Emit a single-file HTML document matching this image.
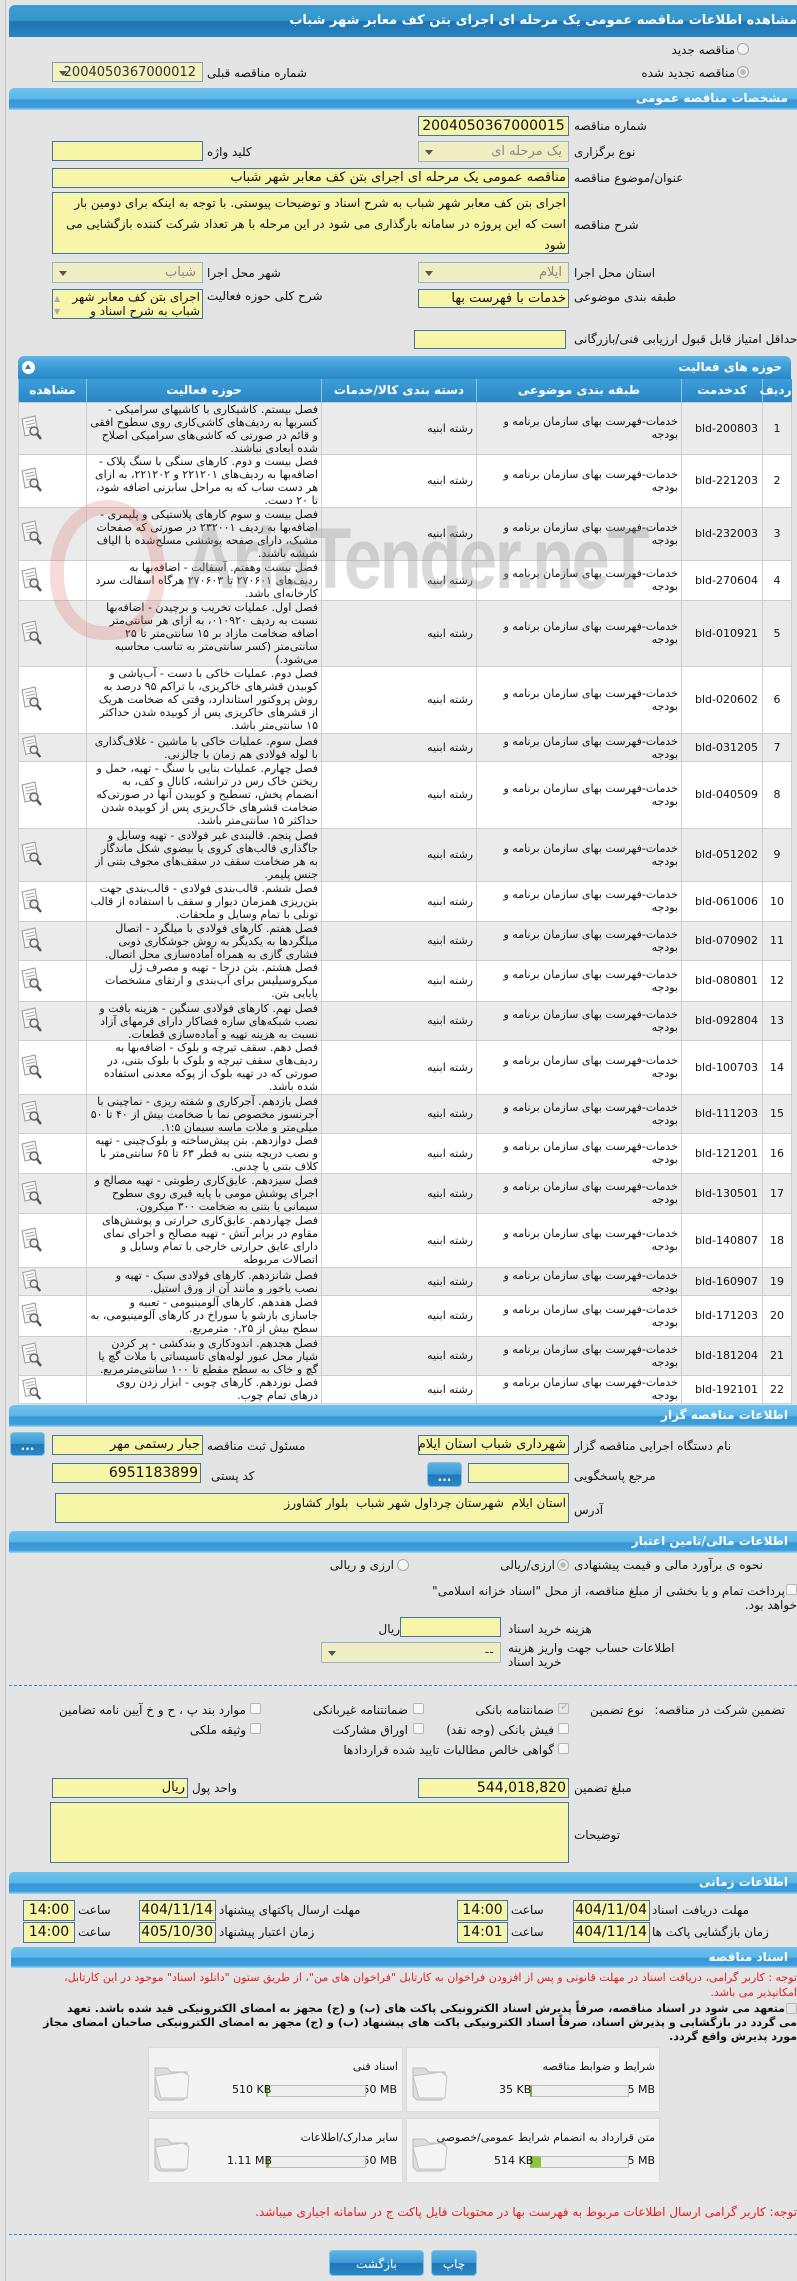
<!DOCTYPE html>
<html><head><meta charset="utf-8">
<style>
*{box-sizing:border-box;margin:0;padding:0}
body{width:797px;height:2281px;background:#e4e4e4;font-family:Tahoma,"DejaVu Sans",sans-serif;font-size:12px;color:#111;position:relative;overflow:hidden}
.a{position:absolute;white-space:nowrap;direction:rtl;line-height:16px}
.tbar{position:absolute;left:9px;right:0;top:5px;height:32px;background:linear-gradient(#3c9dd2 0%,#3596cd 48%,#1c74b2 52%,#2a86c2 100%);border-radius:6px 0 0 0;color:#fff;font-weight:bold;font-size:13px;direction:rtl;line-height:32px;white-space:nowrap;overflow:hidden}
.sbar{position:absolute;left:9px;right:0;height:22px;background:linear-gradient(#6fc3ec 0%,#5cb6e7 48%,#3597d7 55%,#3f9fdc 88%,#a8d9f2 100%);border-radius:5px 0 0 0;color:#fff;font-weight:bold;font-size:12px;direction:rtl;line-height:21px;padding-right:9px;white-space:nowrap}
.in{position:absolute;background:#f7f5a8;border:1px solid #3f74ad;direction:rtl;font-size:13px;line-height:18px;padding:0 2px;white-space:nowrap;overflow:hidden}
.sel{position:absolute;background:#efedc2;border:1px solid #9bb3c8;direction:rtl;font-size:13px;color:#888;line-height:19px;padding:0 6px;white-space:nowrap}
.sel:after{content:"";position:absolute;left:6px;top:8px;border-left:4px solid transparent;border-right:4px solid transparent;border-top:5px solid #555}
.rad{position:absolute;width:12px;height:12px;border:1px solid #aaa;border-radius:50%;background:#f4f4f4}
.chk{position:absolute;width:11px;height:11px;border:1px solid #b5b5b5;border-radius:2px;background:#f7f7f7}
.btn{position:absolute;background:linear-gradient(#5db4e2 0%,#3c9ad6 48%,#1f77b4 52%,#2d88c6 100%);border:1px solid #7ec3ea;border-radius:4px;color:#fff;text-align:center;font-weight:bold}
.dash{position:absolute;left:9px;right:0;border-top:1px dashed #3a8ac8}
table{position:absolute;left:18px;top:379px;width:773px;border-collapse:collapse;table-layout:fixed;direction:rtl;font-size:11px;line-height:13px}
th{background:linear-gradient(#3d9ed8,#2a86c4);color:#fff;font-weight:bold;font-size:12px;height:23px;border-left:1px solid #8cc6ea;text-align:center}
td{border:1px solid #cfcfcf;vertical-align:middle;padding:0 3px;overflow:hidden}
tr:nth-child(odd) td{background:#fff}
tr:nth-child(even) td{background:#ebebeb}
td.n{text-align:center}
td.c{text-align:right;direction:ltr;padding-right:4px}
td.v{text-align:left;padding-left:0}
td div{overflow:hidden}
.fb{position:absolute;background:#f3f3f3;box-shadow:0 0 2px #ccc}
.fb .t{position:absolute;right:4px;top:12px;direction:rtl;font-size:11px;white-space:nowrap}
.fb .bar{position:absolute;top:37px;height:12px;background:#eee;border:1px solid #bbb;border-left:2px solid #7ab030}
.fb .s{position:absolute;top:35px;font-size:11px;white-space:nowrap}
.fb svg{position:absolute;left:2px;top:12px}
.red{color:#e02020}
.sm{font-size:11px}
</style></head><body>
<div style="position:absolute;left:5px;top:0;width:1px;height:2281px;background:#c6c6c6"></div>

<div class="tbar">مشاهده اطلاعات مناقصه عمومی یک مرحله ای اجرای بتن کف معابر شهر شباب</div>

<div class="rad" style="left:737px;top:43px"></div>
<div class="a" style="right:62px;top:42px">مناقصه جدید</div>
<div class="rad" style="left:737px;top:66px;background:radial-gradient(#bbb 35%,#eee 45%)"></div>
<div class="a" style="right:62px;top:65px">مناقصه تجدید شده</div>
<div class="sel" style="left:52px;top:62px;width:151px;height:20px;color:#333;background:#f3f1c0;border-color:#7f9fc0">2004050367000012</div>
<div class="a" style="left:207px;top:65px">شماره مناقصه قبلی</div>

<div class="sbar" style="top:88px">مشخصات مناقصه عمومی</div>

<div class="in" style="left:418px;top:116px;width:151px;height:20px;text-align:center;font-size:14px">2004050367000015</div>
<div class="a" style="left:574px;top:118px">شماره مناقصه</div>
<div class="sel" style="left:418px;top:141px;width:151px;height:21px">یک مرحله ای</div>
<div class="a" style="left:574px;top:144px">نوع برگزاری</div>
<div class="in" style="left:52px;top:141px;width:151px;height:20px"></div>
<div class="a" style="left:207px;top:144px">کلید واژه</div>
<div class="in" style="left:52px;top:168px;width:517px;height:20px;font-size:13px">مناقصه عمومی یک مرحله ای اجرای بتن کف معابر شهر شباب</div>
<div class="a" style="left:574px;top:170px">عنوان/موضوع مناقصه</div>
<div class="in" style="left:52px;top:192px;width:517px;height:62px;white-space:normal;font-size:12px;line-height:21px">اجرای بتن کف معابر شهر شباب به شرح اسناد و توضیحات پیوستی. با توجه به اینکه برای دومین بار است که این پروژه در سامانه بارگذاری می شود در این مرحله با هر تعداد شرکت کننده بازگشایی می شود</div>
<div class="a" style="left:574px;top:217px">شرح مناقصه</div>
<div class="sel" style="left:418px;top:262px;width:151px;height:21px">ایلام</div>
<div class="a" style="left:574px;top:265px">استان محل اجرا</div>
<div class="sel" style="left:52px;top:262px;width:151px;height:21px">شباب</div>
<div class="a" style="left:207px;top:265px">شهر محل اجرا</div>
<div class="in" style="left:418px;top:289px;width:151px;height:19px">خدمات با فهرست بها</div>
<div class="a" style="left:574px;top:289px">طبقه بندی موضوعی</div>
<div class="in" style="left:52px;top:289px;width:151px;height:30px;white-space:normal;font-size:12px;line-height:14px;padding-left:14px">اجرای بتن کف معابر شهر شباب به شرح اسناد و</div>
<div style="position:absolute;left:54px;top:292px;color:#aaa;font-size:8px;line-height:13px">▲<br>▼</div>
<div class="a" style="left:207px;top:288px">شرح کلی حوزه فعالیت</div>
<div class="in" style="left:414px;top:330px;width:152px;height:19px"></div>
<div class="a" style="left:574px;top:331px">حداقل امتیاز قابل قبول ارزیابی فنی/بازرگانی</div>

<div class="sbar" style="left:18px;right:6px;top:356px;height:23px;border-radius:6px 6px 0 0;background:linear-gradient(#5ab3e3 0%,#3c9cd8 50%,#2a88c6 100%);line-height:23px">حوزه های فعالیت</div>
<div style="position:absolute;left:22px;top:361px;width:13px;height:13px;border-radius:50%;background:#fff;"><div style="position:absolute;left:3px;top:3px;border-left:3.5px solid transparent;border-right:3.5px solid transparent;border-bottom:5px solid #2a80c0"></div></div>

<table>
<colgroup><col style="width:29px"><col style="width:81px"><col style="width:205px"><col style="width:155px"><col style="width:235px"><col style="width:68px"></colgroup>
<tr><th>ردیف</th><th>کدخدمت</th><th>طبقه بندی موضوعی</th><th>دسته بندی کالا/خدمات</th><th>حوزه فعالیت</th><th>مشاهده</th></tr>
<tr style="height:52px"><td class="n">1</td><td class="c">bld-200803</td><td>خدمات-فهرست بهای سازمان برنامه و<br>بودجه</td><td>رشته ابنیه</td><td><div style="max-height:51px">فصل بیستم. کاشیکاری با کاشیهای سرامیکی - کسربها به ردیف‌های کاشی‌کاری روی سطوح افقی و قائم در صورتی که کاشی‌های سرامیکی اصلاح شده ابعادی نباشند.</div></td><td class="v"><svg width="26" height="26" viewBox="0 0 26 26"><path d="M3 5L16 2L19 19L6 22Z" fill="#fafafa" stroke="#999"/><path d="M6 8l9-2M7 11l9-2M7 14l6-1" stroke="#aaa"/><circle cx="15" cy="17" r="4" fill="#e8eef4" stroke="#666" stroke-width="1.5"/><path d="M18 20l4 5" stroke="#555" stroke-width="2.5"/></svg></td></tr>
<tr style="height:53px"><td class="n">2</td><td class="c">bld-221203</td><td>خدمات-فهرست بهای سازمان برنامه و<br>بودجه</td><td>رشته ابنیه</td><td><div style="max-height:52px">فصل بیست و دوم. کارهای سنگی با سنگ پلاک - اضافه‌بها به ردیف‌های ۲۲۱۲۰۱ و ۲۲۱۲۰۲، به ازای هر دست ساب که به مراحل سابزنی اضافه شود، تا ۲۰ دست.</div></td><td class="v"><svg width="26" height="26" viewBox="0 0 26 26"><path d="M3 5L16 2L19 19L6 22Z" fill="#fafafa" stroke="#999"/><path d="M6 8l9-2M7 11l9-2M7 14l6-1" stroke="#aaa"/><circle cx="15" cy="17" r="4" fill="#e8eef4" stroke="#666" stroke-width="1.5"/><path d="M18 20l4 5" stroke="#555" stroke-width="2.5"/></svg></td></tr>
<tr style="height:53px"><td class="n">3</td><td class="c">bld-232003</td><td>خدمات-فهرست بهای سازمان برنامه و<br>بودجه</td><td>رشته ابنیه</td><td><div style="max-height:52px">فصل بیست و سوم کارهای پلاستیکی و پلیمری - اضافه‌بها به ردیف ۲۳۲۰۰۱ در صورتی که صفحات مشبک، دارای صفحه پوششی مسلح‌شده با الیاف شیشه باشند.</div></td><td class="v"><svg width="26" height="26" viewBox="0 0 26 26"><path d="M3 5L16 2L19 19L6 22Z" fill="#fafafa" stroke="#999"/><path d="M6 8l9-2M7 11l9-2M7 14l6-1" stroke="#aaa"/><circle cx="15" cy="17" r="4" fill="#e8eef4" stroke="#666" stroke-width="1.5"/><path d="M18 20l4 5" stroke="#555" stroke-width="2.5"/></svg></td></tr>
<tr style="height:40px"><td class="n">4</td><td class="c">bld-270604</td><td>خدمات-فهرست بهای سازمان برنامه و<br>بودجه</td><td>رشته ابنیه</td><td><div style="max-height:39px">فصل بیست وهفتم. آسفالت - اضافه‌بها به ردیف‌های ۲۷۰۶۰۱ تا ۲۷۰۶۰۳ هرگاه اسفالت سرد کارخانه‌ای باشد.</div></td><td class="v"><svg width="26" height="26" viewBox="0 0 26 26"><path d="M3 5L16 2L19 19L6 22Z" fill="#fafafa" stroke="#999"/><path d="M6 8l9-2M7 11l9-2M7 14l6-1" stroke="#aaa"/><circle cx="15" cy="17" r="4" fill="#e8eef4" stroke="#666" stroke-width="1.5"/><path d="M18 20l4 5" stroke="#555" stroke-width="2.5"/></svg></td></tr>
<tr style="height:66px"><td class="n">5</td><td class="c">bld-010921</td><td>خدمات-فهرست بهای سازمان برنامه و<br>بودجه</td><td>رشته ابنیه</td><td><div style="max-height:65px">فصل اول. عملیات تخریب و برچیدن - اضافه‌بها نسبت به ردیف ۰۱۰۹۲۰، به ازای هر سانتی‌متر اضافه ضخامت مازاد بر ۱۵ سانتی‌متر تا ۲۵ سانتی‌متر (کسر سانتی‌متر به تناسب محاسبه می‌شود.)</div></td><td class="v"><svg width="26" height="26" viewBox="0 0 26 26"><path d="M3 5L16 2L19 19L6 22Z" fill="#fafafa" stroke="#999"/><path d="M6 8l9-2M7 11l9-2M7 14l6-1" stroke="#aaa"/><circle cx="15" cy="17" r="4" fill="#e8eef4" stroke="#666" stroke-width="1.5"/><path d="M18 20l4 5" stroke="#555" stroke-width="2.5"/></svg></td></tr>
<tr style="height:67px"><td class="n">6</td><td class="c">bld-020602</td><td>خدمات-فهرست بهای سازمان برنامه و<br>بودجه</td><td>رشته ابنیه</td><td><div style="max-height:66px">فصل دوم. عملیات خاکی با دست - آب‌پاشی و کوبیدن قشرهای خاکریزی، با تراکم ۹۵ درصد به روش پروکتور استاندارد، وقتی که ضخامت هریک از قشرهای خاکریزی پس از کوبیده شدن حداکثر ۱۵ سانتی‌متر باشد.</div></td><td class="v"><svg width="26" height="26" viewBox="0 0 26 26"><path d="M3 5L16 2L19 19L6 22Z" fill="#fafafa" stroke="#999"/><path d="M6 8l9-2M7 11l9-2M7 14l6-1" stroke="#aaa"/><circle cx="15" cy="17" r="4" fill="#e8eef4" stroke="#666" stroke-width="1.5"/><path d="M18 20l4 5" stroke="#555" stroke-width="2.5"/></svg></td></tr>
<tr style="height:26px"><td class="n">7</td><td class="c">bld-031205</td><td><div style="max-height:25px">خدمات-فهرست بهای سازمان برنامه و<br>بودجه</div></td><td>رشته ابنیه</td><td><div style="max-height:25px">فصل سوم. عملیات خاکی با ماشین - غلاف‌گذاری با لوله فولادی هم زمان با چالزنی.</div></td><td class="v"><svg width="26" height="24" viewBox="0 0 26 26"><path d="M3 5L16 2L19 19L6 22Z" fill="#fafafa" stroke="#999"/><path d="M6 8l9-2M7 11l9-2M7 14l6-1" stroke="#aaa"/><circle cx="15" cy="17" r="4" fill="#e8eef4" stroke="#666" stroke-width="1.5"/><path d="M18 20l4 5" stroke="#555" stroke-width="2.5"/></svg></td></tr>
<tr style="height:67px"><td class="n">8</td><td class="c">bld-040509</td><td>خدمات-فهرست بهای سازمان برنامه و<br>بودجه</td><td>رشته ابنیه</td><td><div style="max-height:66px">فصل چهارم. عملیات بنایی با سنگ - تهیه، حمل و ریختن خاک رس در ترانشه، کانال و کف، به انضمام پخش، تسطیح و کوبیدن آنها در صورتی‌که ضخامت قشرهای خاک‌ریزی پس از کوبیده شدن حداکثر ۱۵ سانتی‌متر باشد.</div></td><td class="v"><svg width="26" height="26" viewBox="0 0 26 26"><path d="M3 5L16 2L19 19L6 22Z" fill="#fafafa" stroke="#999"/><path d="M6 8l9-2M7 11l9-2M7 14l6-1" stroke="#aaa"/><circle cx="15" cy="17" r="4" fill="#e8eef4" stroke="#666" stroke-width="1.5"/><path d="M18 20l4 5" stroke="#555" stroke-width="2.5"/></svg></td></tr>
<tr style="height:53px"><td class="n">9</td><td class="c">bld-051202</td><td>خدمات-فهرست بهای سازمان برنامه و<br>بودجه</td><td>رشته ابنیه</td><td><div style="max-height:52px">فصل پنجم. قالبندی غیر فولادی - تهیه وسایل و جاگذاری قالب‌های کروی یا بیضوی شکل ماندگار به هر ضخامت سقف در سقف‌های مجوف بتنی از جنس پلیمر.</div></td><td class="v"><svg width="26" height="26" viewBox="0 0 26 26"><path d="M3 5L16 2L19 19L6 22Z" fill="#fafafa" stroke="#999"/><path d="M6 8l9-2M7 11l9-2M7 14l6-1" stroke="#aaa"/><circle cx="15" cy="17" r="4" fill="#e8eef4" stroke="#666" stroke-width="1.5"/><path d="M18 20l4 5" stroke="#555" stroke-width="2.5"/></svg></td></tr>
<tr style="height:40px"><td class="n">10</td><td class="c">bld-061006</td><td>خدمات-فهرست بهای سازمان برنامه و<br>بودجه</td><td>رشته ابنیه</td><td><div style="max-height:39px">فصل ششم. قالب‌بندی فولادی - قالب‌بندی جهت بتن‌ریزی همزمان دیوار و سقف با استفاده از قالب تونلی با تمام وسایل و ملحقات.</div></td><td class="v"><svg width="26" height="26" viewBox="0 0 26 26"><path d="M3 5L16 2L19 19L6 22Z" fill="#fafafa" stroke="#999"/><path d="M6 8l9-2M7 11l9-2M7 14l6-1" stroke="#aaa"/><circle cx="15" cy="17" r="4" fill="#e8eef4" stroke="#666" stroke-width="1.5"/><path d="M18 20l4 5" stroke="#555" stroke-width="2.5"/></svg></td></tr>
<tr style="height:39px"><td class="n">11</td><td class="c">bld-070902</td><td>خدمات-فهرست بهای سازمان برنامه و<br>بودجه</td><td>رشته ابنیه</td><td><div style="max-height:38px">فصل هفتم. کارهای فولادی با میلگرد - اتصال میلگردها به یکدیگر به روش جوشکاری ذوبی فشاری گازی به همراه آماده‌سازی محل اتصال.</div></td><td class="v"><svg width="26" height="26" viewBox="0 0 26 26"><path d="M3 5L16 2L19 19L6 22Z" fill="#fafafa" stroke="#999"/><path d="M6 8l9-2M7 11l9-2M7 14l6-1" stroke="#aaa"/><circle cx="15" cy="17" r="4" fill="#e8eef4" stroke="#666" stroke-width="1.5"/><path d="M18 20l4 5" stroke="#555" stroke-width="2.5"/></svg></td></tr>
<tr style="height:41px"><td class="n">12</td><td class="c">bld-080801</td><td>خدمات-فهرست بهای سازمان برنامه و<br>بودجه</td><td>رشته ابنیه</td><td><div style="max-height:40px">فصل هشتم. بتن درجا - تهیه و مصرف ژل میکروسیلیس برای آب‌بندی و ارتقای مشخصات پایایی بتن.</div></td><td class="v"><svg width="26" height="26" viewBox="0 0 26 26"><path d="M3 5L16 2L19 19L6 22Z" fill="#fafafa" stroke="#999"/><path d="M6 8l9-2M7 11l9-2M7 14l6-1" stroke="#aaa"/><circle cx="15" cy="17" r="4" fill="#e8eef4" stroke="#666" stroke-width="1.5"/><path d="M18 20l4 5" stroke="#555" stroke-width="2.5"/></svg></td></tr>
<tr style="height:39px"><td class="n">13</td><td class="c">bld-092804</td><td>خدمات-فهرست بهای سازمان برنامه و<br>بودجه</td><td>رشته ابنیه</td><td><div style="max-height:38px">فصل نهم. کارهای فولادی سنگین - هزینه بافت و نصب شبکه‌های سازه فضاکار دارای قرمهای آزاد نسبت به هزینه تهیه و آماده‌سازی قطعات.</div></td><td class="v"><svg width="26" height="26" viewBox="0 0 26 26"><path d="M3 5L16 2L19 19L6 22Z" fill="#fafafa" stroke="#999"/><path d="M6 8l9-2M7 11l9-2M7 14l6-1" stroke="#aaa"/><circle cx="15" cy="17" r="4" fill="#e8eef4" stroke="#666" stroke-width="1.5"/><path d="M18 20l4 5" stroke="#555" stroke-width="2.5"/></svg></td></tr>
<tr style="height:54px"><td class="n">14</td><td class="c">bld-100703</td><td>خدمات-فهرست بهای سازمان برنامه و<br>بودجه</td><td>رشته ابنیه</td><td><div style="max-height:53px">فصل دهم. سقف تیرچه و بلوک - اضافه‌بها به ردیف‌های سقف تیرچه و بلوک با بلوک بتنی، در صورتی که در تهیه بلوک از پوکه معدنی استفاده شده باشد.</div></td><td class="v"><svg width="26" height="26" viewBox="0 0 26 26"><path d="M3 5L16 2L19 19L6 22Z" fill="#fafafa" stroke="#999"/><path d="M6 8l9-2M7 11l9-2M7 14l6-1" stroke="#aaa"/><circle cx="15" cy="17" r="4" fill="#e8eef4" stroke="#666" stroke-width="1.5"/><path d="M18 20l4 5" stroke="#555" stroke-width="2.5"/></svg></td></tr>
<tr style="height:39px"><td class="n">15</td><td class="c">bld-111203</td><td>خدمات-فهرست بهای سازمان برنامه و<br>بودجه</td><td>رشته ابنیه</td><td><div style="max-height:38px">فصل یازدهم. آجرکاری و شفته ریزی - نماچینی با آجرنسوز مخصوص نما با ضخامت بیش از ۴۰ تا ۵۰ میلی‌متر و ملات ماسه سیمان ۱:۵.</div></td><td class="v"><svg width="26" height="26" viewBox="0 0 26 26"><path d="M3 5L16 2L19 19L6 22Z" fill="#fafafa" stroke="#999"/><path d="M6 8l9-2M7 11l9-2M7 14l6-1" stroke="#aaa"/><circle cx="15" cy="17" r="4" fill="#e8eef4" stroke="#666" stroke-width="1.5"/><path d="M18 20l4 5" stroke="#555" stroke-width="2.5"/></svg></td></tr>
<tr style="height:40px"><td class="n">16</td><td class="c">bld-121201</td><td>خدمات-فهرست بهای سازمان برنامه و<br>بودجه</td><td>رشته ابنیه</td><td><div style="max-height:39px">فصل دوازدهم. بتن پیش‌ساخته و بلوک‌چینی - تهیه و نصب دریچه بتنی به قطر ۶۳ تا ۶۵ سانتی‌متر با کلاف بتنی یا چدنی.</div></td><td class="v"><svg width="26" height="26" viewBox="0 0 26 26"><path d="M3 5L16 2L19 19L6 22Z" fill="#fafafa" stroke="#999"/><path d="M6 8l9-2M7 11l9-2M7 14l6-1" stroke="#aaa"/><circle cx="15" cy="17" r="4" fill="#e8eef4" stroke="#666" stroke-width="1.5"/><path d="M18 20l4 5" stroke="#555" stroke-width="2.5"/></svg></td></tr>
<tr style="height:40px"><td class="n">17</td><td class="c">bld-130501</td><td>خدمات-فهرست بهای سازمان برنامه و<br>بودجه</td><td>رشته ابنیه</td><td><div style="max-height:39px">فصل سیزدهم. عایق‌کاری رطوبتی - تهیه مصالح و اجرای پوشش مومی با پایه قیری روی سطوح سیمانی یا بتنی به ضخامت ۳۰۰ میکرون.</div></td><td class="v"><svg width="26" height="26" viewBox="0 0 26 26"><path d="M3 5L16 2L19 19L6 22Z" fill="#fafafa" stroke="#999"/><path d="M6 8l9-2M7 11l9-2M7 14l6-1" stroke="#aaa"/><circle cx="15" cy="17" r="4" fill="#e8eef4" stroke="#666" stroke-width="1.5"/><path d="M18 20l4 5" stroke="#555" stroke-width="2.5"/></svg></td></tr>
<tr style="height:54px"><td class="n">18</td><td class="c">bld-140807</td><td>خدمات-فهرست بهای سازمان برنامه و<br>بودجه</td><td>رشته ابنیه</td><td><div style="max-height:53px">فصل چهاردهم. عایق‌کاری حرارتی و پوشش‌های مقاوم در برابر آتش - تهیه مصالح و اجرای نمای دارای عایق حرارتی خارجی با تمام وسایل و اتصالات مربوطه</div></td><td class="v"><svg width="26" height="26" viewBox="0 0 26 26"><path d="M3 5L16 2L19 19L6 22Z" fill="#fafafa" stroke="#999"/><path d="M6 8l9-2M7 11l9-2M7 14l6-1" stroke="#aaa"/><circle cx="15" cy="17" r="4" fill="#e8eef4" stroke="#666" stroke-width="1.5"/><path d="M18 20l4 5" stroke="#555" stroke-width="2.5"/></svg></td></tr>
<tr style="height:26px"><td class="n">19</td><td class="c">bld-160907</td><td><div style="max-height:25px">خدمات-فهرست بهای سازمان برنامه و<br>بودجه</div></td><td>رشته ابنیه</td><td><div style="max-height:25px">فصل شانزدهم. کارهای فولادی سبک - تهیه و نصب پاخور و مانند آن از ورق استیل.</div></td><td class="v"><svg width="26" height="24" viewBox="0 0 26 26"><path d="M3 5L16 2L19 19L6 22Z" fill="#fafafa" stroke="#999"/><path d="M6 8l9-2M7 11l9-2M7 14l6-1" stroke="#aaa"/><circle cx="15" cy="17" r="4" fill="#e8eef4" stroke="#666" stroke-width="1.5"/><path d="M18 20l4 5" stroke="#555" stroke-width="2.5"/></svg></td></tr>
<tr style="height:41px"><td class="n">20</td><td class="c">bld-171203</td><td>خدمات-فهرست بهای سازمان برنامه و<br>بودجه</td><td>رشته ابنیه</td><td><div style="max-height:40px">فصل هفدهم. کارهای آلومینیومی - تعبیه و جاسازی بازشو یا سوراخ در کارهای آلومینیومی، به سطح بیش از ۰,۲۵ مترمربع.</div></td><td class="v"><svg width="26" height="26" viewBox="0 0 26 26"><path d="M3 5L16 2L19 19L6 22Z" fill="#fafafa" stroke="#999"/><path d="M6 8l9-2M7 11l9-2M7 14l6-1" stroke="#aaa"/><circle cx="15" cy="17" r="4" fill="#e8eef4" stroke="#666" stroke-width="1.5"/><path d="M18 20l4 5" stroke="#555" stroke-width="2.5"/></svg></td></tr>
<tr style="height:39px"><td class="n">21</td><td class="c">bld-181204</td><td>خدمات-فهرست بهای سازمان برنامه و<br>بودجه</td><td>رشته ابنیه</td><td><div style="max-height:38px">فصل هجدهم. اندودکاری و بندکشی - پر کردن شیار محل عبور لوله‌های تاسیساتی با ملات گچ یا گچ و خاک به سطح مقطع تا ۱۰۰ سانتی‌مترمربع.</div></td><td class="v"><svg width="26" height="26" viewBox="0 0 26 26"><path d="M3 5L16 2L19 19L6 22Z" fill="#fafafa" stroke="#999"/><path d="M6 8l9-2M7 11l9-2M7 14l6-1" stroke="#aaa"/><circle cx="15" cy="17" r="4" fill="#e8eef4" stroke="#666" stroke-width="1.5"/><path d="M18 20l4 5" stroke="#555" stroke-width="2.5"/></svg></td></tr>
<tr style="height:27px"><td class="n">22</td><td class="c">bld-192101</td><td><div style="max-height:26px">خدمات-فهرست بهای سازمان برنامه و<br>بودجه</div></td><td>رشته ابنیه</td><td><div style="max-height:26px">فصل نوزدهم. کارهای چوبی - ابزار زدن روی درهای تمام چوب.</div></td><td class="v"><svg width="26" height="24" viewBox="0 0 26 26"><path d="M3 5L16 2L19 19L6 22Z" fill="#fafafa" stroke="#999"/><path d="M6 8l9-2M7 11l9-2M7 14l6-1" stroke="#aaa"/><circle cx="15" cy="17" r="4" fill="#e8eef4" stroke="#666" stroke-width="1.5"/><path d="M18 20l4 5" stroke="#555" stroke-width="2.5"/></svg></td></tr>
</table>

<div style="position:absolute;left:50px;top:500px;width:115px;height:140px;border:14px solid rgba(220,90,90,.22);border-radius:50% 50% 45% 45%;pointer-events:none"></div>
<div style="position:absolute;left:185px;top:510px;font-size:86px;font-weight:bold;font-family:'Liberation Sans',sans-serif;color:rgba(150,150,150,.35);letter-spacing:-3px;pointer-events:none;white-space:nowrap;transform:scaleX(.8);transform-origin:left">AriaTender.neT</div>

<div class="sbar" style="top:1405px">اطلاعات مناقصه گزار</div>
<div class="in" style="left:418px;top:1435px;width:151px;height:20px;font-size:13px">شهرداری شباب استان ایلام</div>
<div class="a" style="left:574px;top:1438px">نام دستگاه اجرایی مناقصه گزار</div>
<div class="in" style="left:52px;top:1435px;width:151px;height:20px">جبار رستمی مهر</div>
<div class="a" style="left:207px;top:1438px">مسئول ثبت مناقصه</div>
<div class="btn" style="left:10px;top:1432px;width:35px;height:24px;line-height:26px">...</div>
<div class="in" style="left:468px;top:1463px;width:101px;height:20px"></div>
<div class="btn" style="left:427px;top:1462px;width:35px;height:25px;line-height:28px">...</div>
<div class="a" style="left:574px;top:1468px">مرجع پاسخگویی</div>
<div class="in" style="left:52px;top:1463px;width:149px;height:20px;font-size:14px">6951183899</div>
<div class="a" style="left:211px;top:1468px">کد پستی</div>
<div class="in" style="left:55px;top:1493px;width:514px;height:30px;font-size:12px">استان ایلام &nbsp;شهرستان چرداول شهر شباب &nbsp;بلوار کشاورز</div>
<div class="a" style="left:574px;top:1502px">آدرس</div>

<div class="sbar" style="top:1531px">اطلاعات مالی/تامین اعتبار</div>
<div class="a" style="left:574px;top:1557px">نحوه ی برآورد مالی و قیمت پیشنهادی</div>
<div class="rad" style="left:557px;top:1559px;background:radial-gradient(#bbb 35%,#eee 45%)"></div>
<div class="a" style="right:242px;top:1557px">ارزی/ریالی</div>
<div class="rad" style="left:397px;top:1559px"></div>
<div class="a" style="right:403px;top:1557px">ارزی و ریالی</div>
<div class="chk" style="left:786px;top:1584px"></div>
<div class="a" style="right:12px;top:1583px">پرداخت تمام و یا بخشی از مبلغ مناقصه، از محل "اسناد خزانه اسلامی"</div>
<div class="a" style="right:0;top:1597px">خواهد بود.</div>
<div class="in" style="left:400px;top:1617px;width:101px;height:20px"></div>
<div class="a" style="right:397px;top:1621px">ریال</div>
<div class="a" style="left:508px;top:1621px">هزینه خرید اسناد</div>
<div class="sel" style="left:321px;top:1642px;width:180px;height:21px;color:#333">--</div>
<div class="a" style="left:508px;top:1640px">اطلاعات حساب جهت واریز هزینه</div>
<div class="a" style="left:508px;top:1654px">خرید اسناد</div>
<div class="dash" style="top:1685px"></div>

<div class="a" style="right:12px;top:1702px">تضمین شرکت در مناقصه:</div>
<div class="a" style="left:590px;top:1702px">نوع تضمین</div>
<div class="chk" style="left:558px;top:1703px;background:#e6e6e6"><span style="position:absolute;left:1px;top:-4px;color:#aaa;font-size:11px">✓</span></div>
<div class="a" style="right:243px;top:1702px">ضمانتنامه بانکی</div>
<div class="chk" style="left:558px;top:1723px"></div>
<div class="a" style="right:243px;top:1722px">فیش بانکی (وجه نقد)</div>
<div class="chk" style="left:558px;top:1743px"></div>
<div class="a" style="right:243px;top:1742px">گواهی خالص مطالبات تایید شده قراردادها</div>
<div class="chk" style="left:413px;top:1703px"></div>
<div class="a" style="right:389px;top:1702px">ضمانتنامه غیربانکی</div>
<div class="chk" style="left:413px;top:1723px"></div>
<div class="a" style="right:389px;top:1722px">اوراق مشارکت</div>
<div class="chk" style="left:250px;top:1703px"></div>
<div class="a" style="right:551px;top:1702px">موارد بند پ ، ح و خ آیین نامه تضامین</div>
<div class="chk" style="left:250px;top:1723px"></div>
<div class="a" style="right:551px;top:1722px">وثیقه ملکی</div>

<div class="in" style="left:418px;top:1778px;width:151px;height:20px;font-size:14px">544,018,820</div>
<div class="a" style="left:574px;top:1780px">مبلغ تضمین</div>
<div class="in" style="left:52px;top:1778px;width:136px;height:20px">ریال</div>
<div class="a" style="left:192px;top:1780px">واحد پول</div>
<div class="in" style="left:50px;top:1802px;width:519px;height:61px"></div>
<div class="a" style="left:574px;top:1827px">توضیحات</div>

<div class="sbar" style="top:1872px">اطلاعات زمانی</div>
<div class="a" style="left:652px;top:1902px">مهلت دریافت اسناد</div>
<div class="in" style="left:573px;top:1900px;width:77px;height:21px;font-size:14px;line-height:19px">1404/11/04</div>
<div class="a" style="left:511px;top:1902px">ساعت</div>
<div class="in" style="left:457px;top:1900px;width:51px;height:21px;font-size:14px;line-height:19px;text-align:center">14:00</div>
<div class="a" style="left:219px;top:1902px">مهلت ارسال پاکتهای پیشنهاد</div>
<div class="in" style="left:139px;top:1900px;width:77px;height:21px;font-size:14px;line-height:19px">1404/11/14</div>
<div class="a" style="left:78px;top:1902px">ساعت</div>
<div class="in" style="left:23px;top:1900px;width:52px;height:21px;font-size:14px;line-height:19px;text-align:center">14:00</div>
<div class="a" style="left:652px;top:1924px">زمان بازگشایی پاکت ها</div>
<div class="in" style="left:573px;top:1922px;width:77px;height:21px;font-size:14px;line-height:19px">1404/11/14</div>
<div class="a" style="left:511px;top:1924px">ساعت</div>
<div class="in" style="left:457px;top:1922px;width:51px;height:21px;font-size:14px;line-height:19px;text-align:center">14:01</div>
<div class="a" style="left:219px;top:1924px">زمان اعتبار پیشنهاد</div>
<div class="in" style="left:139px;top:1922px;width:77px;height:21px;font-size:14px;line-height:19px">1405/10/30</div>
<div class="a" style="left:78px;top:1924px">ساعت</div>
<div class="in" style="left:23px;top:1922px;width:52px;height:21px;font-size:14px;line-height:19px;text-align:center">14:00</div>

<div class="sbar" style="left:11px;top:1947px;height:21px">اسناد مناقصه</div>
<div class="a red sm" style="right:0;top:1970px">توجه : کاربر گرامی، دریافت اسناد در مهلت قانونی و پس از افزودن فراخوان به کارتابل "فراخوان های من"، از طریق ستون "دانلود اسناد" موجود در این کارتابل،</div>
<div class="a red sm" style="right:0;top:1985px">امکانپذیر می باشد.</div>
<div class="chk" style="left:786px;top:2003px;background:#e6e6e6"></div>
<div class="a sm" style="right:12px;top:2001px;font-weight:bold">متعهد می شود در اسناد مناقصه، صرفاً پذیرش اسناد الکترونیکی پاکت های (ب) و (ج) مجهز به امضای الکترونیکی قید شده باشد. تعهد</div>
<div class="a sm" style="right:0;top:2015px;font-weight:bold">می گردد در بازگشایی و پذیرش اسناد، صرفاً اسناد الکترونیکی پاکت های پیشنهاد (ب) و (ج) مجهز به امضای الکترونیکی صاحبان امضای مجاز</div>
<div class="a sm" style="right:0;top:2029px;font-weight:bold">مورد پذیرش واقع گردد.</div>

<div class="fb" style="left:407px;top:2048px;width:252px;height:63px"><div class="t">شرایط و ضوابط مناقصه</div><div class="s" style="right:4px">5 MB</div><div class="bar" style="left:123px;width:99px"></div><div class="s" style="left:92px">35 KB</div><svg width="42" height="42" viewBox="0 0 42 42"><path d="M4 8h12l4 4h16v24l-4 4H8L4 36Z" fill="#ddd" stroke="#bbb"/><path d="M4 16l28-4 6 4-2 22H10Z" fill="#f4f4f4" stroke="#c4c4c4"/></svg></div>
<div class="fb" style="left:149px;top:2048px;width:253px;height:63px"><div class="t">اسناد فنی</div><div class="s" style="right:5px">50 MB</div><div class="bar" style="left:117px;width:100px"></div><div class="s" style="left:83px">510 KB</div><svg width="42" height="42" viewBox="0 0 42 42"><path d="M4 8h12l4 4h16v24l-4 4H8L4 36Z" fill="#ddd" stroke="#bbb"/><path d="M4 16l28-4 6 4-2 22H10Z" fill="#f4f4f4" stroke="#c4c4c4"/></svg></div>
<div class="fb" style="left:407px;top:2119px;width:252px;height:63px"><div class="t">متن قرارداد به انضمام شرایط عمومی/خصوصی</div><div class="s" style="right:4px">5 MB</div><div class="bar" style="left:123px;width:99px;border-left:11px solid #8cc63f"></div><div class="s" style="left:87px">514 KB</div><svg width="42" height="42" viewBox="0 0 42 42"><path d="M4 8h12l4 4h16v24l-4 4H8L4 36Z" fill="#ddd" stroke="#bbb"/><path d="M4 16l28-4 6 4-2 22H10Z" fill="#f4f4f4" stroke="#c4c4c4"/></svg></div>
<div class="fb" style="left:149px;top:2119px;width:253px;height:63px"><div class="t">سایر مدارک/اطلاعات</div><div class="s" style="right:5px">50 MB</div><div class="bar" style="left:117px;width:100px;border-left:3px solid #7ab030"></div><div class="s" style="left:78px">1.11 MB</div><svg width="42" height="42" viewBox="0 0 42 42"><path d="M4 8h12l4 4h16v24l-4 4H8L4 36Z" fill="#ddd" stroke="#bbb"/><path d="M4 16l28-4 6 4-2 22H10Z" fill="#f4f4f4" stroke="#c4c4c4"/></svg></div>

<div class="a red" style="right:0;top:2204px">توجه: کاربر گرامی ارسال اطلاعات مربوط به فهرست بها در محتویات فایل پاکت ج در سامانه اجباری میباشد.</div>
<div class="dash" style="top:2234px"></div>
<div class="btn" style="left:329px;top:2250px;width:95px;height:26px;line-height:26px;font-weight:normal;font-size:12px">بازگشت</div>
<div class="btn" style="left:431px;top:2250px;width:46px;height:26px;line-height:26px;font-weight:normal;font-size:12px">چاپ</div>
</body></html>
